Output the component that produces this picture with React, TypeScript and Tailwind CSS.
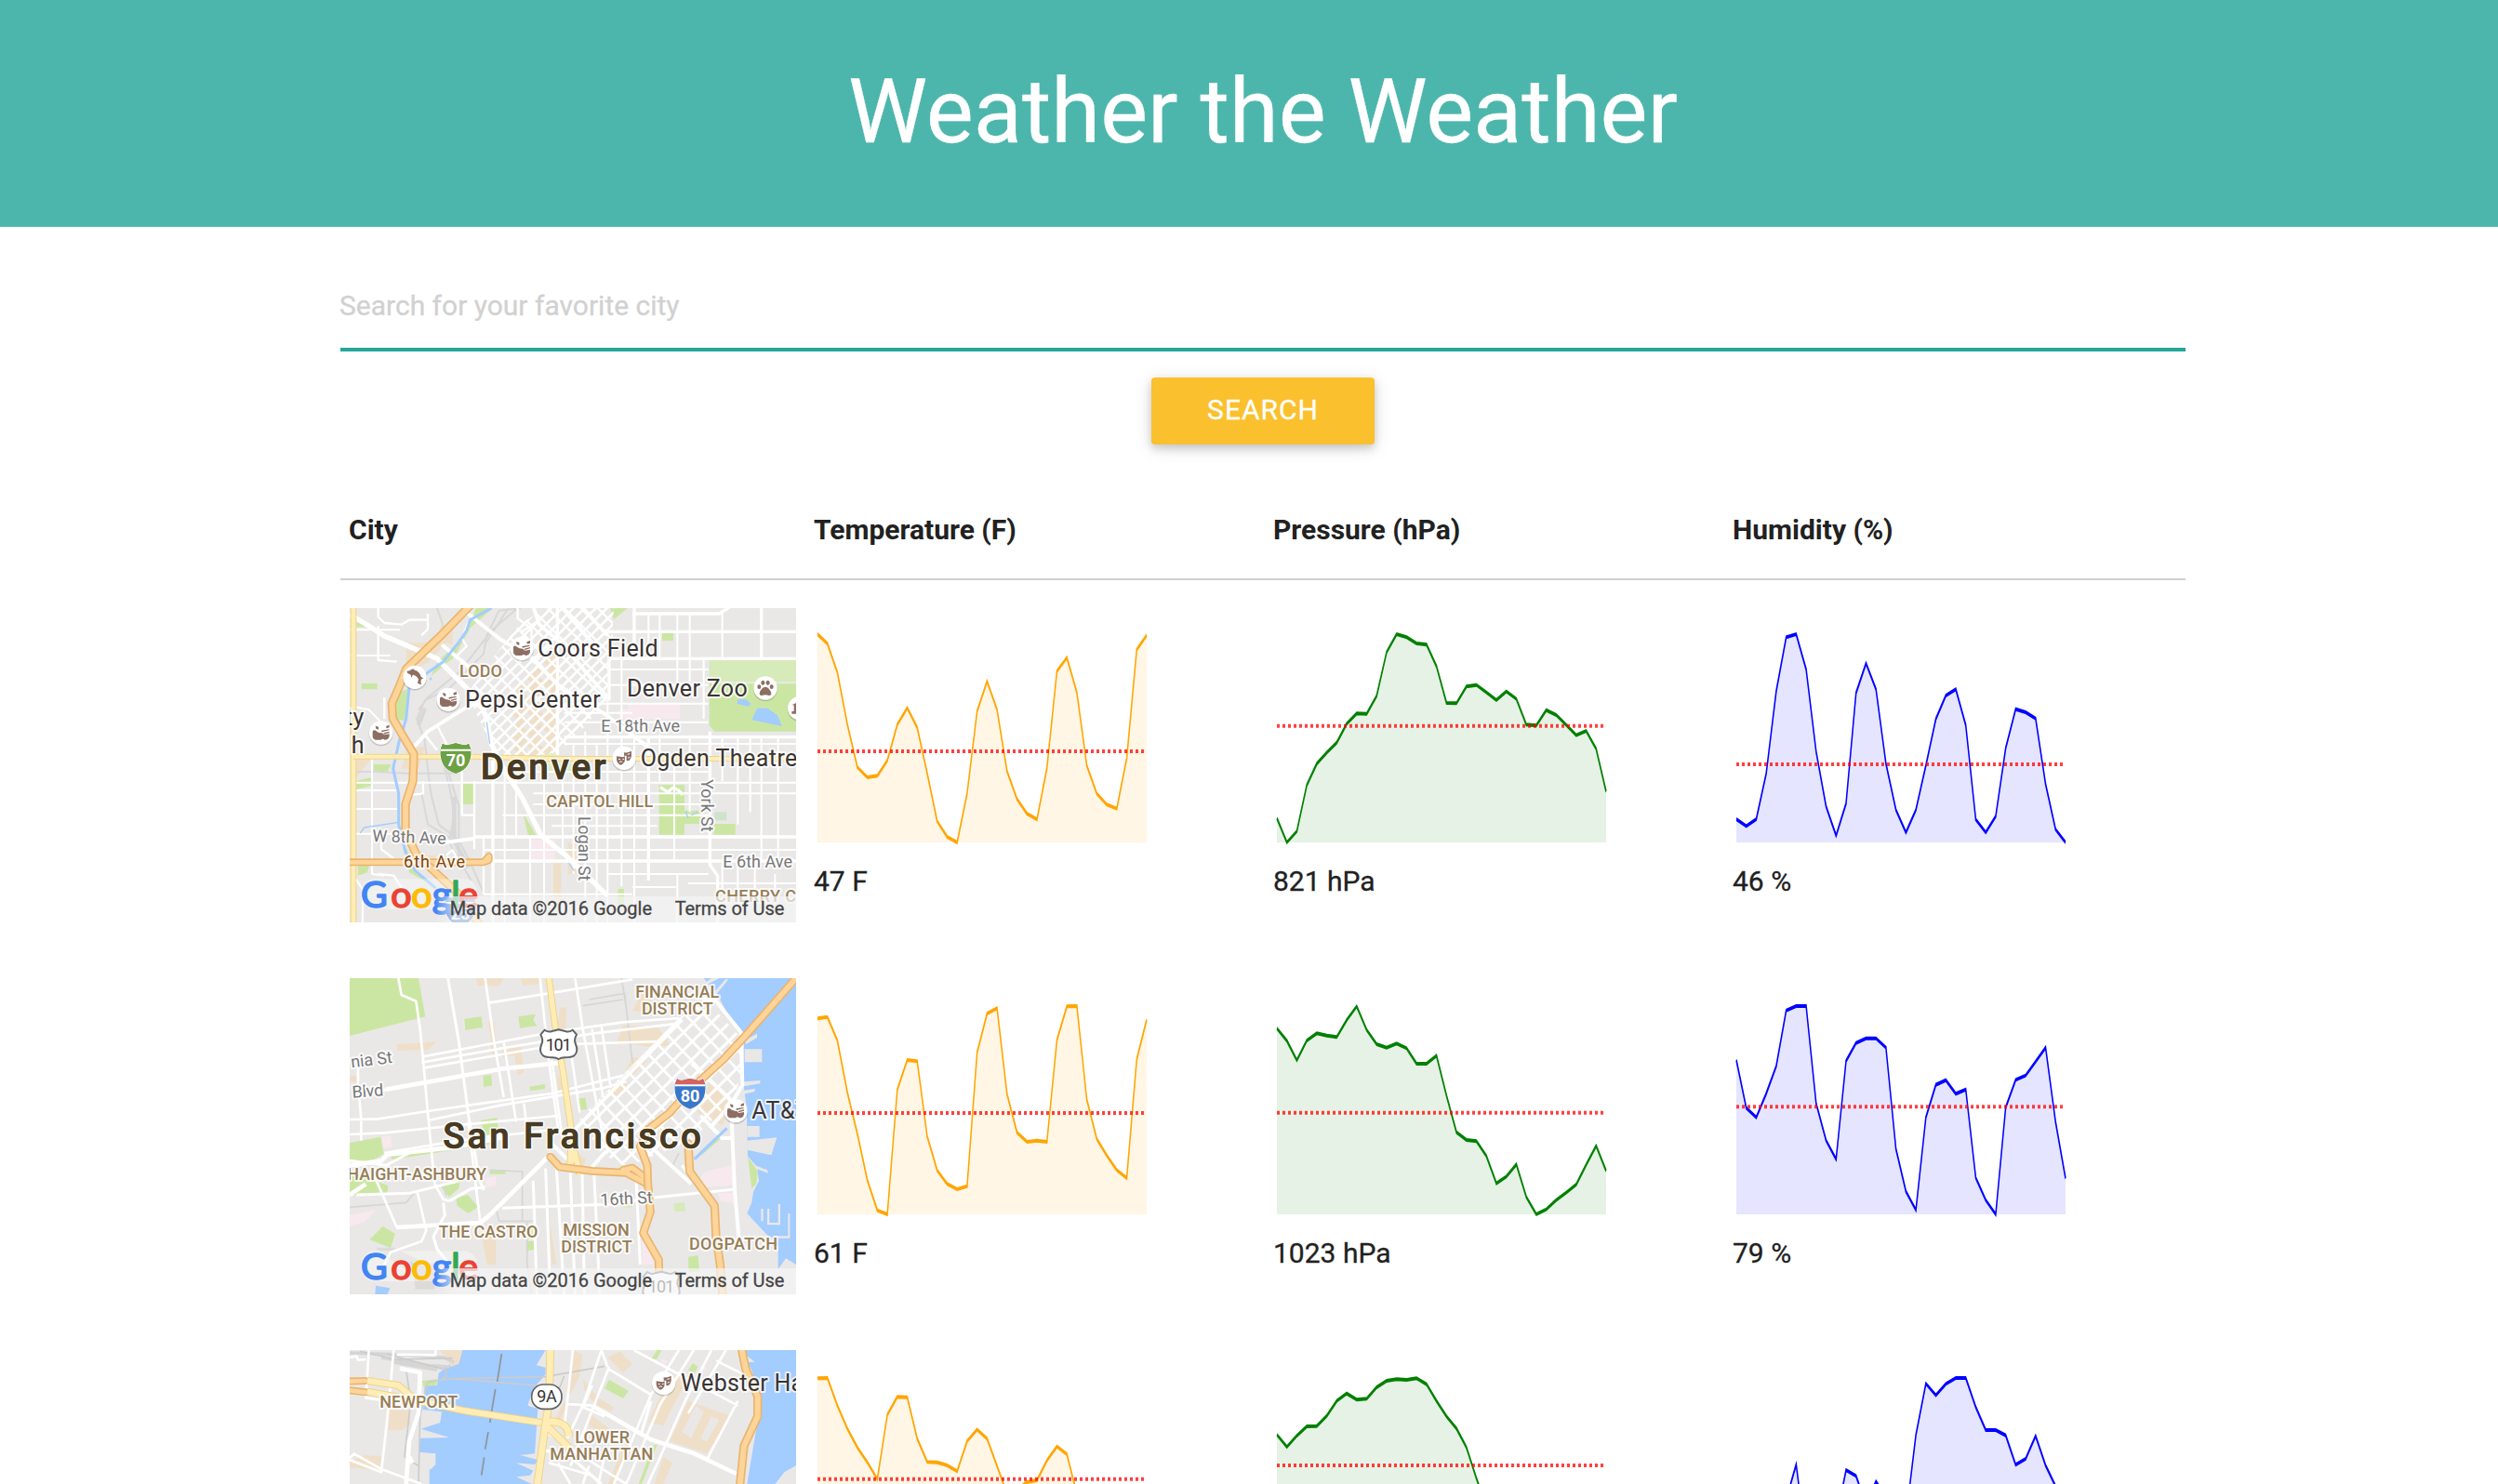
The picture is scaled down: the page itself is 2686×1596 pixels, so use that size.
import React from "react";

/* ---------- Sparklines ---------- */

const SAMPLE_TOP = 66;
const SAMPLE_SCALE = 12;
const toY = (v: number) => 2 + (v - SAMPLE_TOP) / SAMPLE_SCALE;

interface ChartData {
  color: string;
  mean: number;
  samples: number[];
}

function Sparkline({ color, mean, samples }: ChartData) {
  const step = 236 / (samples.length - 1);
  const line = samples.map((v, i) => `${(2 + i * step).toFixed(2)},${toY(v).toFixed(2)}`).join(" ");
  const y = toY(mean);
  return (
    <svg className="block h-[240px] w-[360px]" viewBox="0 0 240 60" preserveAspectRatio="none">
      <polygon points={`${line} 238,58 2,58`} fill={color} fillOpacity={0.1} />
      <polyline points={line} fill="none" stroke={color} strokeWidth={1} />
      <line x1={2} x2={238} y1={y} y2={y} stroke="red" strokeOpacity={0.75} strokeDasharray="2 2" />
    </svg>
  );
}

/* ---------- Map drawing helpers ---------- */

const LAND = "#e9e8e7";
const PARK = "#cbe6a3";
const WATER = "#a3ccff";
const TAN = "#f0dfc8";
const PINK = "#f8e9ef";

function Roads({ d, w = 8, color = "#ffffff" }: { d: string; w?: number; color?: string }) {
  return <path d={d} fill="none" stroke={color} strokeWidth={w} strokeLinejoin="round" />;
}

function Highway({ d, w = 26 }: { d: string; w?: number }) {
  return (
    <g fill="none" strokeLinejoin="round" strokeLinecap="round">
      <path d={d} stroke="#e8b56f" strokeWidth={w} />
      <path d={d} stroke="#fed499" strokeWidth={w - 10} />
    </g>
  );
}

function Arterial({ d, w = 20 }: { d: string; w?: number }) {
  return (
    <g fill="none" strokeLinejoin="round">
      <path d={d} stroke="#eed48c" strokeWidth={w} />
      <path d={d} stroke="#ffedb5" strokeWidth={w - 6} />
    </g>
  );
}

interface LabelProps {
  x: number;
  y: number;
  w: number;
  size?: number;
  color?: string;
  weight?: number;
  rotate?: number;
  children: string;
}

function Label({ x, y, w, size = 54, color = "#777777", weight = 400, rotate = 0, children }: LabelProps) {
  return (
    <text
      x={x}
      y={y}
      textLength={w}
      fontSize={size}
      fontWeight={weight}
      fill={color}
      stroke="#ffffff"
      strokeOpacity={0.75}
      strokeWidth={12}
      strokeLinejoin="round"
      paintOrder="stroke"
      transform={rotate ? `rotate(${rotate} ${x} ${y})` : undefined}
    >
      {children}
    </text>
  );
}

const Area = (p: LabelProps) => <Label color="#967d56" weight={500} size={54} {...p} />;
const Place = (p: LabelProps) => <Label color="#3a3433" size={75} {...p} />;
const CityName = (p: LabelProps) => (
  <>
    <Label color="#483b22" weight={500} size={116} {...p} />
    <text x={p.x} y={p.y} textLength={p.w} fontSize={116} fontWeight={500} fill="#483b22" stroke="#483b22" strokeWidth={2} aria-hidden="true">
      {p.children}
    </text>
  </>
);

function Pin({ x, y, children }: { x: number; y: number; children: React.ReactNode }) {
  return (
    <g transform={`translate(${x} ${y})`}>
      <circle cx={0} cy={4} r={39} fill="#000" fillOpacity={0.16} />
      <circle r={38} fill="#fff" />
      <g fill="#8d6e63">{children}</g>
    </g>
  );
}

const Stadium = () => (
  <>
    <path d="M-27-3Q-27-9-20-8Q-8 2 4 1L10 7L27 4V12Q24 23 12 23Q6 17 0 23H-18Q-27 20-27 12Z" />
    <path d="M-18-22L-8-19V-10L-16-13ZM16-21L27-25V-17L18-14ZM1-7L26-11V-8L3-2ZM8 1L27-4V0L10 5Z" />
  </>
);

const Masks = () => (
  <>
    <path d="M-24-6L-4-3L3-6L2 12Q-4 22-12 22Q-22 18-24 5Z" />
    <path d="M0-18Q12-16 24-23V-7Q21 8 12 9L8 8V-8L0-8Z" />
    <path d="M-18 3L-12 4M-5 4L0 3M-15 13Q-10 8-5 13M11-12L19-14M12 0Q16-4 19-2" stroke="#fff" strokeWidth={3} fill="none" />
  </>
);

const Paw = () => (
  <>
    <ellipse cx={-20} cy={-4} rx={6} ry={7} />
    <ellipse cx={-8} cy={-17} rx={6} ry={8} />
    <ellipse cx={8} cy={-17} rx={6} ry={8} />
    <ellipse cx={20} cy={-4} rx={6} ry={7} />
    <path d="M0-4C9-4 19 10 19 18Q18 26 9 23Q0 20-9 23Q-18 26-19 18C-19 10-9-4 0-4Z" />
  </>
);

const Dolphin = () => (
  <path d="M-25-20L-16-21Q-10-29-2-26L-1-23Q15-20 20-2L28 4L20 7Q18 17 22 24L9 20L12 6Q4-7-6-8L-11 1L-13-8Q-20-10-25-15Z" />
);

function Interstate({ x, y, n, top, body }: { x: number; y: number; n: string; top: string; body: string }) {
  return (
    <g transform={`translate(${x} ${y})`}>
      <path
        d="M-42-48Q-32-40-18-45L0-49L18-45Q32-40 42-48L49-30Q54 32 0 49Q-54 32-49-30Z"
        fill={body}
        stroke="#fff"
        strokeOpacity={0.7}
        strokeWidth={5}
        paintOrder="stroke"
      />
      <path d="M-42-48Q-32-40-18-45L0-49L18-45Q32-40 42-48L48-31H-48Z" fill={top} />
      <path d="M-49-27H49" stroke="#fff" strokeWidth={6} />
      <text x={0} y={26} textAnchor="middle" fontSize={54} fontWeight={700} fill="#fff">
        {n}
      </text>
    </g>
  );
}

function UsRoute({ x, y, n }: { x: number; y: number; n: string }) {
  return (
    <g transform={`translate(${x} ${y})`}>
      <path
        d="M-45-46Q-34-37-21-42L0-47L21-42Q34-37 45-46L58-31Q48-14 55 0Q65 24 50 37Q43 43 20 43Q8 43 0 48Q-8 43-20 43Q-43 43-50 37Q-65 24-55 0Q-48-14-58-31Z"
        fill="#fff"
        stroke="#606467"
        strokeWidth={6}
        strokeLinejoin="round"
      />
      <text x={0} y={21} textAnchor="middle" fontSize={54} textLength={84} fill="#333">
        {n}
      </text>
    </g>
  );
}

function GoogleMark() {
  return (
    <g fontFamily="Lato, sans-serif" fontSize={118} fontWeight={400} strokeLinejoin="round">
      <rect x={84} y={916} width={376} height={98} rx={44} fill="#ffffff" fillOpacity={0.35} />
      <text y={1007} strokeWidth={5}>
        <tspan x={84} fill="#4285f4" stroke="#4285f4">G</tspan>
        <tspan x={181} fill="#ea4335" stroke="#ea4335">o</tspan>
        <tspan x={247} fill="#fbbc05" stroke="#fbbc05">o</tspan>
        <tspan x={314} fill="#4285f4" stroke="#4285f4">g</tspan>
        <tspan x={376} fill="#34a853" stroke="#34a853">l</tspan>
        <tspan x={400} fill="#ea4335" stroke="#ea4335">e</tspan>
      </text>
    </g>
  );
}

function MapFrame({ name, inset, children }: { name: string; inset?: boolean; children: React.ReactNode }) {
  return (
    <div className={inset ? "h-[340px] w-[480px] overflow-hidden border-t-2 border-white" : "h-[340px] w-[480px] overflow-hidden"}>
      <svg
        className={inset ? "-mt-0.5 block h-[340px] w-[480px]" : "block h-[340px] w-[480px]"}
        viewBox="48 36 1440 1020"
        fontFamily="Roboto, sans-serif"
        role="img"
        aria-label={name}
      >
        <rect x={48} y={36} width={1440} height={1020} fill={LAND} />
        {children}
        <GoogleMark />
        <linearGradient id="credit" x1="0" x2="1">
          <stop offset="0" stopColor="#f5f5f5" stopOpacity={0} />
          <stop offset="0.05" stopColor="#f5f5f5" stopOpacity={0.7} />
        </linearGradient>
        <rect x={325} y={972} width={1163} height={84} fill="url(#credit)" />
        <g fontSize={60} fill="#444444" stroke="#444444" strokeWidth={0.8}>
          <text x={371} y={1031} textLength={652}>Map data ©2016 Google</text>
          <text x={1097} y={1031} textLength={353}>Terms of Use</text>
        </g>
      </svg>
    </div>
  );
}

const series = (from: number, to: number, step: number) =>
  Array.from({ length: Math.floor((to - from) / step) + 1 }, (_, i) => from + i * step);

/* ---------- Denver ---------- */

function DenverMap() {
  return (
    <MapFrame name="Denver" inset>
      <clipPath id="downtown">
        <path d="M520 190L600 90L700 36H900L885 330L800 430L715 520H540L500 470L450 370L440 300Z" />
      </clipPath>
      <g fill={PARK}>
        <path d="M1208 286H1488V440H1225L1208 420Z" />
        <path d="M1208 207H1488V280H1208Z" fill="#d7eab9" />
        <path d="M1046 613H1128V773H1046ZM1128 695L1180 695V738H1292V773H1222V738H1128ZM1056 122H1092V147H1056ZM86 285H137V304H86ZM413 605H448V675H413ZM125 546H182L170 570H125ZM68 600L118 588V615L68 628ZM75 870H112L105 895L75 905ZM606 700L650 776H624ZM913 948H933V1000H913Z" />
        <path d="M455 42H510L438 105L385 200L310 262L330 215L395 155L440 85ZM888 42H945L900 78ZM197 318L242 300L224 405L197 400ZM230 810L260 890L330 945L240 895ZM70 86L105 103H70Z" />
        <path d="M690 545H770V570H690Z" fill="#d9ecc4" />
        <path d="M1225 700H1264V727H1225Z" fill="#cfe3cb" />
      </g>
      <path d="M945 350H1113V400H918V368H945ZM628 790H710V852H628Z" fill={PINK} />
      <path d="M230 155L330 150L380 130L300 220L230 245ZM340 100H380V160L330 150ZM235 490H290L270 560H215ZM68 520H125L68 590ZM230 840H330L270 890ZM752 800H778V900H752ZM705 865H730V1000H705Z" fill={TAN} />
      <Roads color="#d8d8d8" w={6} d="M600 42L530 50L490 130L480 190L370 300L290 340L265 400L290 470L300 560L310 640L335 740L400 790L440 870L480 960M590 42L510 110L400 250L300 330L270 370M340 500L370 620L385 700L370 800L440 920M280 640L300 740L400 800M560 42L490 150M350 520L400 680V860M360 130L330 42M70 570H130L230 575H400" />
      <Roads color="#d8d8d8" w={14} d="M385 650V790L430 880M290 365L270 420" />
      <g clipPath="url(#downtown)">
        {series(902, 1190, 36).map((c) => (
          <path key={c} d={`M720 ${c - 720}L580 ${c - 580}`} stroke={TAN} strokeWidth={18} strokeDasharray="58 16" />
        ))}
        {series(560, 1240, 36).map((c) => (
          <path key={c} d={`M${c - 36} 36L${c - 530} 530`} stroke="#fff" strokeWidth={8} />
        ))}
        {series(50, 860, 54).map((c) => (
          <path key={c} d={`M${c + 36} 36L${c + 530} 530`} stroke="#fff" strokeWidth={7} />
        ))}
      </g>
      <Roads w={10} d="M960 60H1240L1275 38M880 118H1488M880 205H1488M740 458H1488M450 780H1488M500 858H1488M966 42V210M885 205V340M1210 440V870L1235 905V1056M718 36V545M1012 458V920M510 480V1056M1376 36V200" />
      <Roads w={6} d="M60 605H1488M880 240H1205M880 290H1205M740 350H1205M740 380H960M740 410H1205M740 480H1488M560 570H1205M640 640H1488M640 675H1205M700 745H1040M540 710H1205M480 822H1488M880 900H1205M960 942H1100M1140 930H1488M480 965H960M48 112H210M48 195H180M60 630H205M60 690H210M60 770H220M60 360L110 370L160 420M120 520V900L160 905" />
      <Roads w={6} d="M548 560V1056M585 560V780M630 780V1056M675 600V1056M735 600V820M770 480V900M808 440V1056M845 480V1056M880 340V1056M925 458V940M966 458V1056M1048 60V200M1105 60V280M1145 60V200M1048 450V600M1095 550V858M1145 458V700M1250 455V600M1300 455V740M1340 455V700M1430 455V858M1376 455V858M1190 200V400M1250 60V200M1355 858V950M1250 858V950M1420 900V950M925 205V400M1012 60V205M1145 205V280M1300 858V950M1105 900V1056" />
      <Roads w={7} d="M140 42V70L160 90L215 95L240 80H300M140 100V210L200 215M300 60V110L280 130M160 330V400M330 420L370 500M290 450L330 500M410 560V710H450M450 600V820M285 600V640L240 645M140 900L190 905L225 960M150 790V820L190 850M480 780V965M360 840L380 822L400 860M60 905L90 950V1056M590 42V75L635 110V170L600 200M660 80L600 120M700 160L640 220M430 90L410 140L425 165L390 200" />
      <Roads w={16} d="M48 62L115 103L160 132L245 168L330 205L395 270L470 345L490 400L505 480L545 560L605 655L665 775L745 840L880 970" />
      <Roads w={12} d="M430 60L530 140L640 205L720 290L880 390L1010 490M255 490L300 440L420 365L480 335M640 36L660 95L730 155L880 330M735 42L860 190M800 42L880 130M340 800L450 785M345 160L430 230L500 260" />
      <Roads w={10} d="M1050 620L1075 636L1090 622Q1110 625 1122 645" />
      <Roads color={WATER} w={9} d="M505 42L437 80L425 115L400 152L350 215L300 250L240 298L230 400L208 470L188 560L206 640V740L228 830L260 890L325 945" />
      <Roads color={WATER} w={4} d="M206 733L95 750L82 768M490 410L500 480M755 865L772 890M1132 700L1140 720M1150 710L1170 700" />
      <path d="M1362 365H1396L1428 388L1443 423L1345 403ZM1300 337L1325 335L1342 350L1335 360L1297 350ZM305 270L313 264L311 277Z" fill={WATER} />
      <path d="M640 520L700 510L760 530L700 550Z" fill="#e5efb8" />
      <Arterial d="M60 36V1056" w={20} />
      <Arterial d="M60 521H440L700 528H1488" w={18} />
      <Highway d="M48 862H480L497 843V855L480 862" w={24} />
      <Highway d="M450 20L345 128L230 238L210 290L184 350L187 398L220 455L255 513L252 600L228 675V760L262 835L330 900L400 965L470 1070" w={28} />
      <Interstate x={405} y={1020} n="25" top="#3c78cd" body="#3c78cd" />
      <Area x={402} y={264} w={138}>LODO</Area>
      <Area x={682} y={684} w={345}>CAPITOL HILL</Area>
      <Area x={1227} y={990} w={395}>CHERRY CREEK</Area>
      <Label x={859} y={441} w={254}>E 18th Ave</Label>
      <Label x={1252} y={879} w={224}>E 6th Ave</Label>
      <Label x={121} y={795} w={238} rotate={2}>W 8th Ave</Label>
      <Label x={222} y={880} w={198} color="#7a450f">6th Ave</Label>
      <Label x={1181} y={594} w={170} rotate={90}>York St</Label>
      <Label x={787} y={714} w={208} rotate={90}>Logan St</Label>
      <Place x={655} y={197} w={388}>Coors Field</Place>
      <Place x={420} y={363} w={437}>Pepsi Center</Place>
      <Place x={942} y={326} w={389}>Denver Zoo</Place>
      <Place x={986} y={551} w={506}>Ogden Theatre</Place>
      <Place x={34} y={421} w={60}>ty</Place>
      <Place x={53} y={510} w={42}>h</Place>
      <CityName x={470} y={594} w={405}>Denver</CityName>
      <Interstate x={390} y={527} n="70" top="#6ca144" body="#6ca144" />
      <Pin x={603} y={172}><Stadium /></Pin>
      <Pin x={366} y={337}><Stadium /></Pin>
      <Pin x={149} y={444}><Stadium /></Pin>
      <Pin x={258} y={265}><Dolphin /></Pin>
      <Pin x={1389} y={300}><Paw /></Pin>
      <Pin x={933} y={526}><Masks /></Pin>
      <Pin x={1499} y={365}>
        <path d="M-25-10L0-22V-10H-8V10H0V18H-25V10H-18V-10Z" />
      </Pin>
    </MapFrame>
  );
}

/* ---------- San Francisco ---------- */

function SanFranciscoMap() {
  return (
    <MapFrame name="San Francisco">
      <clipPath id="soma">
        <path d="M790 490L1110 165L1200 110L1312 230V330L1290 420L1150 560L940 645L860 600Z" />
      </clipPath>
      <path d="M1190 36H1488V960L1455 940L1430 975L1375 930L1430 880L1400 870L1330 795L1345 760L1350 725L1368 690L1362 645L1332 610L1328 450L1320 390V240L1300 190L1275 165L1235 90Z" fill={WATER} />
      <path d="M1322 265H1378V307H1322ZM1325 235L1362 215V228L1325 250ZM1320 370L1372 366V376L1320 385ZM1320 398L1355 392V402L1320 410ZM1330 513H1370V548H1330ZM1330 560L1426 550L1408 607L1330 590ZM1395 780H1402V825H1430V765H1437V832H1395ZM1375 780H1382V820H1375ZM1462 795H1468V875H1415V868H1462ZM1195 60L1240 36H1215L1190 55ZM1225 95L1270 40H1260L1218 88ZM1330 630L1395 655L1398 665L1330 640ZM1345 900H1430V975H1345Z" fill={LAND} />
      <g fill={PARK}>
        <path d="M48 36H270L292 160L48 222ZM418 167L473 160L477 195L421 204ZM592 160L648 152L640 172L652 190L597 197ZM478 352L505 347L507 383L480 386ZM628 386L678 378V393L630 400ZM782 425L808 421L814 459L787 462ZM470 495L523 486L528 535L485 542ZM48 567L148 548L158 602L105 635L48 622ZM48 660L130 690L172 705L168 735H48ZM180 608L490 560L500 572L185 622ZM340 705L405 680L400 715L368 742ZM390 745L430 735L462 775L430 795L395 770ZM112 880L155 836L195 860L180 906L150 895ZM617 885H648V912L620 915ZM1140 935L1172 930L1176 982L1142 985ZM1332 612L1365 660L1360 700L1345 715ZM1160 615L1245 540L1250 550L1185 605ZM500 655H550V668H500Z" />
        <path d="M1093 762L1128 760L1131 788L1096 790ZM920 750H960V775H925ZM620 840H650V870H620Z" fill="#d7eab9" />
      </g>
      <path d="M1190 662L1280 640L1284 705L1165 712ZM150 548L180 542L185 580L158 585ZM485 680L520 675V705L488 712ZM1235 730L1290 728V762L1245 755ZM990 880L1010 900L1030 960H992ZM48 800L130 785L100 820L48 838Z" fill={PINK} />
      <path d="M200 250L330 240L300 268L200 270ZM455 36H545L530 62L460 60ZM495 175L515 180L522 290H508ZM540 262L600 255L610 340L590 350L580 285L540 290ZM600 36H660V55L605 60ZM725 130L748 130L745 200H720ZM930 190L1040 190L1080 250L1040 262L960 250L910 240ZM880 390L935 355L945 395L900 425ZM1000 66L960 140L1010 150L1030 60ZM1210 370L1290 430L1250 510L1170 470ZM440 600L455 680H440ZM470 840H520V960H490ZM690 800L715 960H700ZM48 350H72V370H48ZM715 330L740 400H720ZM960 290L1010 300L960 350L940 330ZM780 600L810 620L795 660Z" fill={TAN} />
      <path d="M130 905L190 905L300 960L280 1000L200 960ZM250 950L340 960L320 1040L260 1040Z" fill="#dcdbd8" />
      <path d="M132 1028L178 1036L170 1056H130ZM240 950L262 958L250 966Z" fill={WATER} />
      <Roads color="#d6d6d6" w={5} d="M820 105L935 85L960 310M800 125L930 105M925 36L940 130M500 655L605 660V820M48 775L230 760L260 725M350 700L360 740M520 780L530 820H640M620 820V960L635 1056M1090 640L1110 600" />
      <Roads w={8} d="M205 36L215 90L262 110L275 200L285 300L300 470L322 700L350 750L370 755M485 36L515 250L545 420M662 36L690 300L720 520M775 36L800 200L850 470L870 560M500 115L690 85L960 40M280 290L690 212L930 178L1110 165M280 308L540 262L830 215L1110 182M290 325L540 282L720 250L1050 240M860 190L890 390M830 200L865 420M48 492L140 490L300 465L700 408L930 350M300 495L540 445L860 392L940 370M48 540L160 535L400 510L720 480M160 600L400 560L700 525M545 240L585 500M75 320V380L85 490V560M430 500L470 830M130 680L200 840L290 832M265 720L295 850L280 885L180 920L160 960M610 440L620 520M700 300L735 560M750 200L770 330L790 470" />
      <Roads w={9} d="M365 36L400 240L430 470L465 680L480 720M640 690L652 1056M680 650L695 1056M715 650L740 1056M760 665L775 1056M798 660L805 1056M835 640L855 1056M540 778L900 765L1020 745L1290 717M970 640L985 960M48 625L165 640L240 600M70 735L240 730L400 690M165 395L140 400M370 755L440 715L485 710M350 760L355 800L318 870L330 910L370 960M1120 640L1150 680" />
      <Roads w={14} d="M165 395L390 355L540 328L720 310M500 800L600 700L700 600M200 840L470 825L500 800M48 640L150 625L170 605L400 580L560 545M48 735L100 700" />
      <g clipPath="url(#soma)">
        {series(1180, 1600, 58).map((c) => (
          <path key={c} d={`M${c} 100L${c - 600} 690`} stroke="#fff" strokeWidth={9} />
        ))}
        {series(300, 1250, 60).map((c) => (
          <path key={c} d={`M${c} 100L${c + 560} 690`} stroke="#fff" strokeWidth={8} />
        ))}
      </g>
      <Roads w={12} d="M740 560L900 395L1120 170M1140 90L1230 110L1310 210L1315 380L1280 440L1210 520M1030 590L1150 700M1150 310L1290 440M1280 490L1290 720L1305 890M700 570L750 620M830 645L870 600L930 560M1180 480L1250 552H1280" />
      <Roads color={WATER} w={10} d="M1160 620L1265 520" />
      <Arterial d="M690 30L712 200L735 330L765 540L758 640L775 600L790 670" w={22} />
      <Highway d="M695 612L725 645L830 658L940 664L1008 700M930 655L960 648L1008 685" w={26} />
      <Highway d="M1140 570L1145 660L1225 770L1230 870L1243 960L1252 1070" w={28} />
      <Highway d="M1500 22L1320 227L1255 297L1150 392L1080 470L1010 525L985 580L1008 640L1010 700L1018 790L995 858L1045 945L1048 1070" w={27} />
      <Area x={970} y={100} w={270}>FINANCIAL</Area>
      <Area x={990} y={153} w={230}>DISTRICT</Area>
      <Area x={40} y={687} w={449}>HAIGHT-ASHBURY</Area>
      <Area x={335} y={873} w={320}>THE CASTRO</Area>
      <Area x={736} y={867} w={214}>MISSION</Area>
      <Area x={730} y={921} w={229}>DISTRICT</Area>
      <Area x={1143} y={911} w={285}>DOGPATCH</Area>
      <Label x={54} y={325} w={134} rotate={-7}>nia St</Label>
      <Label x={57} y={422} w={101} rotate={-4}>Blvd</Label>
      <Label x={857} y={770} w={169} rotate={-3}>16th St</Label>
      <Place x={1345} y={489} w={185}>AT&amp;T</Place>
      <CityName x={349} y={584} w={833}>San Francisco</CityName>
      <UsRoute x={722} y={249} n="101" />
      <UsRoute x={1053} y={1030} n="101" />
      <Interstate x={1146} y={409} n="80" top="#d8625f" body="#3a77cb" />
      <Pin x={1293} y={464}><Stadium /></Pin>
    </MapFrame>
  );
}

/* ---------- New York ---------- */

function NewYorkMap() {
  return (
    <MapFrame name="New York">
      <path d="M410 36H680L650 85L680 92V115L640 160L622 215L655 225L645 370L598 375L655 390L645 405L585 400L640 425L630 440L585 445L635 468V1056H310L305 420L358 433L305 425L325 405V370L270 365L275 320L370 318L278 290L340 270L345 235L285 228L290 150L330 150L335 110L365 88Z" fill={WATER} />
      <path d="M1320 36H1488V408L1450 430L1380 520L1330 468L1358 300L1378 220L1345 100L1330 75H1355L1325 50Z" fill={WATER} />
      <path d="M870 160L885 131L948 168L930 192ZM1022 62L1040 36H1055L1038 66ZM1140 100L1155 78L1172 90L1158 112ZM1025 345L1040 340L990 468H980ZM282 135L330 130L328 150L285 153Z" fill={PARK} />
      <path d="M1050 65L1075 70L1060 95ZM1175 90H1200L1190 108Z" fill={PINK} />
      <path d="M340 36H412L400 80L375 90ZM175 225L240 230L245 275L215 295L172 295ZM48 395L95 375L150 378L145 425L48 415ZM770 36L800 50L790 120L760 180L745 170ZM800 130L850 190L900 220L890 235L845 215L805 165ZM750 210L720 280L705 270L740 200ZM1080 120L1140 130L1100 200L1060 280L1010 270ZM1140 200L1280 250L1200 370L1080 330ZM880 60L920 40L960 80L930 110ZM930 350L960 330L900 468H880ZM1060 380L1090 400L1060 468H1030ZM820 240L900 300L880 320L820 280Z" fill={TAN} />
      <path d="M1165 215L1190 235L1150 320L1120 300ZM1215 250L1240 262L1200 330L1180 320Z" fill={LAND} />
      <Roads color="#d5d5d5" w={10} d="M48 45L200 50L350 60L385 75M150 60L300 85L370 90M190 75L330 100" />
      <Roads color="#cccccc" w={5} d="M80 40L200 66L380 62M170 50L360 100M355 90L360 120L345 132L380 128L680 122L870 88M380 128L680 152M345 132L300 140L275 250L270 468M230 100L245 200L225 380L270 410M740 120L720 170" />
      <Roads color="#8f9499" w={5} d="M538 48L524 138M518 162L500 270M495 300L485 356M482 382L473 440" />
      <Roads w={8} d="M110 36L100 190L170 200M190 36L170 250L150 430L48 390M48 60L70 55L75 68L100 66M200 50L325 52V36M48 385L62 370L150 420L280 468M768 36L740 290M860 36L800 215L750 320M885 90L760 410M965 36L1300 215M860 36L880 90M1110 36L1020 180L900 468M1158 36L1050 210L940 468M1215 36L1130 200L1050 380L1010 468M1262 36L1140 240M1300 200L1200 390M880 95L1020 180M750 210L830 215M680 300L880 430L940 468M830 150L800 220L870 250M820 410L800 468M870 380L850 468M720 400L760 468M1230 70L1310 110M690 400L830 440" />
      <Roads w={14} d="M210 95L275 108L270 240L240 330L230 468M830 215L1020 325L1160 370L1295 435M240 380L250 400" />
      <Roads w={10} d="M680 360L760 380L860 468M1020 200L990 300" />
      <Highway d="M40 137L98 135M40 165L100 172" w={24} />
      <Arterial d="M105 135L205 150L262 198L420 232L680 272M105 170L262 198" w={24} />
      <Arterial d="M695 30L692 200L680 272L652 480M680 266Q755 262 755 315M682 280L755 350" w={26} />
      <Highway d="M1310 20L1325 95L1364 185V250L1320 345L1306 480" w={28} />
      <Area x={145} y={222} w={252}>NEWPORT</Area>
      <Area x={775} y={336} w={176}>LOWER</Area>
      <Area x={694} y={390} w={333}>MANHATTAN</Area>
      <Place x={1116} y={167} w={435}>Webster Hall</Place>
      <rect x={635} y={147} width={97} height={79} rx={38} fill="#fff" stroke="#606467" strokeWidth={5} />
      <text x={652} y={205} fontSize={54} textLength={64} fill="#333">9A</text>
      <Pin x={1061} y={142}><Masks /></Pin>
    </MapFrame>
  );
}

/* ---------- Page ---------- */

interface CityRow {
  city: string;
  map: React.ReactNode;
  charts: { label: string; data: ChartData }[];
}

const rows: CityRow[] = [
  {
    city: "Denver",
    map: <DenverMap />,
    charts: [
      { label: "47 F", data: { color: "orange", mean: 444, samples: [66, 97, 190, 358, 495, 528, 523, 474, 358, 304, 368, 515, 670, 720, 738, 580, 315, 218, 310, 508, 598, 645, 664, 498, 186, 142, 254, 490, 581, 616, 629, 466, 116, 70] } },
      { label: "821 hPa", data: { color: "green", mean: 362, samples: [660, 738, 702, 553, 484, 448, 416, 355, 322, 323, 265, 124, 66, 76, 96, 100, 170, 288, 289, 235, 230, 254, 279, 251, 275, 358, 361, 311, 327, 359, 392, 378, 436, 574] } },
      { label: "46 %", data: { color: "blue", mean: 486, samples: [663, 685, 663, 515, 250, 76, 66, 180, 445, 622, 716, 612, 256, 160, 244, 484, 633, 706, 633, 490, 340, 264, 244, 360, 664, 706, 654, 434, 308, 318, 338, 550, 696, 738] } },
    ],
  },
  {
    city: "San Francisco",
    map: <SanFranciscoMap />,
    charts: [
      { label: "61 F", data: { color: "orange", mean: 411, samples: [106, 101, 178, 345, 478, 628, 725, 738, 336, 240, 244, 487, 596, 640, 657, 647, 216, 90, 73, 350, 474, 504, 500, 504, 176, 67, 66, 368, 495, 548, 595, 621, 238, 110] } },
      { label: "1023 hPa", data: { color: "green", mean: 410, samples: [138, 178, 241, 177, 154, 161, 166, 111, 67, 143, 189, 200, 187, 202, 252, 252, 226, 355, 473, 498, 502, 550, 638, 616, 577, 682, 738, 722, 692, 668, 642, 578, 517, 598] } },
      { label: "79 %", data: { color: "blue", mean: 391, samples: [240, 395, 425, 348, 260, 80, 66, 66, 380, 500, 560, 243, 185, 170, 170, 200, 527, 664, 724, 425, 320, 305, 349, 335, 620, 692, 738, 393, 304, 290, 245, 200, 440, 622] } },
    ],
  },
  {
    city: "New York",
    map: <NewYorkMap />,
    charts: [
      { label: "58 F", data: { color: "orange", mean: 392, samples: [67, 66, 155, 230, 290, 338, 392, 185, 127, 128, 262, 337, 338, 348, 367, 270, 232, 262, 350, 440, 425, 402, 396, 332, 287, 312, 440, 560, 620, 640, 600, 560, 640, 738] } },
      { label: "1019 hPa", data: { color: "green", mean: 348, samples: [249, 288, 252, 222, 221, 188, 140, 116, 136, 133, 96, 75, 70, 72, 67, 86, 140, 190, 229, 290, 390, 480, 540, 580, 620, 640, 660, 690, 700, 710, 720, 738, 720, 700] } },
      { label: "72 %", data: { color: "blue", mean: 440, samples: [640, 600, 620, 580, 520, 458, 345, 600, 640, 660, 523, 363, 382, 475, 400, 450, 600, 516, 250, 84, 122, 85, 66, 66, 160, 234, 234, 251, 346, 327, 253, 348, 415, 500] } },
    ],
  },
];

const columns = "grid grid-cols-[500px_494px_494px_496px]";

export default function App() {
  return (
    <div className="h-[1596px] overflow-hidden bg-white font-['Roboto',sans-serif] text-[30px] leading-[45px] text-[#212121] [-webkit-text-stroke:0.3px]">
      <header className="flex h-[244px] items-center justify-center bg-[#4db6ac] pb-1 pl-[30px]">
        <h1 className="text-[96px] leading-[106px] text-white">Weather the Weather</h1>
      </header>

      <main className="mx-[366px] w-[1984px]">
        <form className="flex flex-col items-center">
          <input
            type="text"
            placeholder="Search for your favorite city"
            className="mt-[42px] -indent-px h-[92px] w-full border-b-4 border-[#26a69a] bg-transparent pb-1 outline-none placeholder:text-[#d1d1d1]"
          />
          <button
            type="button"
            className="mt-7 flex h-[72px] w-[240px] items-center justify-center rounded-[4px] bg-[#fbc02d] pb-[3px] tracking-[1px] text-white shadow-[0_4px_10px_rgba(0,0,0,0.16),0_4px_20px_rgba(0,0,0,0.12)]"
          >
            SEARCH
          </button>
        </form>

        <section>
          <div className={`${columns} mt-[38px] h-[108px] items-center border-b-2 border-[#d0d0d0] font-bold [-webkit-text-stroke:0px]`}>
            <div className="pl-[9px]">City</div>
            <div className="pl-[9px]">Temperature (F)</div>
            <div className="pl-[9px]">Pressure (hPa)</div>
            <div className="pl-[9px]">Humidity (%)</div>
          </div>
          <div className="pt-7">
            {rows.map((row) => (
              <div key={row.city} className={`${columns} h-[400px]`}>
                <div className="pl-2.5 [-webkit-text-stroke:0px]">{row.map}</div>
                {row.charts.map(({ label, data }) => (
                  <div key={label} className="pl-2.5 pt-[22px]">
                    <Sparkline {...data} />
                    <div className="-ml-px mt-[11px]">{label}</div>
                  </div>
                ))}
              </div>
            ))}
          </div>
        </section>
      </main>
    </div>
  );
}
